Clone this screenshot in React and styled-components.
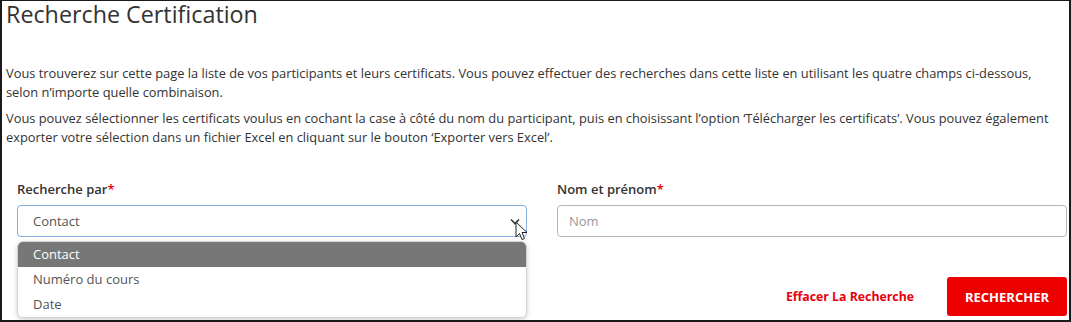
import React from "react";
import styled, { createGlobalStyle } from "styled-components";

const Global = createGlobalStyle`
  html, body { margin: 0; padding: 0; background: #fff; }
  body { font-family: "Open Sans", "Noto Sans", Arial, sans-serif; }
  * { box-sizing: border-box; }
`;

const Frame = styled.div`
  width: 1071px;
  height: 322px;
  border: 1px solid #1a1a1a;
  border-left-width: 2px;
  border-bottom-width: 2px;
  border-right-width: 2px;
  background: #fff;
  overflow: hidden;
  position: relative;
`;

const Title = styled.h1`
  margin: 0 0 0 4px;
  font-size: 23.3px;
  line-height: 26px;
  font-weight: 400;
  color: #333;
`;

const Text = styled.p`
  margin: ${(p) => p.$top}px 6px 0 4px;
  font-size: 12.85px;
  line-height: 19px;
  color: #333;
`;

const Form = styled.div`
  display: grid;
  grid-template-columns: 510px 510px;
  column-gap: 30px;
  margin: 33px 0 0 15px;
`;

const Field = styled.div`
  display: flex;
  flex-direction: column;
  gap: 6px;
  position: relative;
`;

const Label = styled.label`
  font-size: 13px;
  line-height: 19px;
  font-weight: 600;
  color: #333;
  span { color: #e00; }
`;

const SelectBox = styled.div`
  height: 32px;
  border: 1px solid #86aede;
  border-radius: 4px;
  display: flex;
  align-items: center;
  justify-content: space-between;
  padding: 0 6px 0 15px;
  font-size: 13px;
  color: #555;
  position: relative;
`;

const Input = styled.div`
  height: 32px;
  border: 1px solid #b5b5b5;
  border-radius: 4px;
  display: flex;
  align-items: center;
  padding: 0 11px;
  font-size: 13px;
  color: #999;
`;

const Menu = styled.ul`
  position: absolute;
  left: 0;
  right: 0;
  top: 61px;
  margin: 0;
  padding: 0;
  list-style: none;
  background: #fff;
  border: 1px solid #d4d4d4;
  border-radius: 6px;
  overflow: hidden;
  box-shadow: 0 2px 5px rgba(0, 0, 0, 0.18);
  z-index: 2;
`;

const Option = styled.li`
  height: 25px;
  line-height: 24px;
  padding-left: 15px;
  font-size: 13px;
  color: ${(p) => (p.$active ? "#fff" : "#555")};
  background: ${(p) => (p.$active ? "#777" : "#fff")};
`;

const Actions = styled.div`
  display: flex;
  justify-content: flex-end;
  align-items: center;
  gap: 33px;
  margin-top: 40px;
`;

const LinkButton = styled.button`
  background: none;
  border: none;
  padding: 0;
  font-family: inherit;
  font-size: 12.3px;
  font-weight: 700;
  color: #e8000b;
  cursor: pointer;
`;

const PrimaryButton = styled.button`
  width: 120px;
  height: 39px;
  border: none;
  border-radius: 3px;
  background: #ec0000;
  color: #fff;
  font-family: inherit;
  font-size: 13px;
  font-weight: 700;
  cursor: pointer;
`;

const Cursor = styled.svg`
  position: absolute;
  right: -2px;
  top: 15px;
  z-index: 3;
`;

export default function App() {
  return (
    <>
      <Global />
      <Frame>
        <Title>Recherche Certification</Title>
        <Text $top={37}>
          Vous trouverez sur cette page la liste de vos participants et leurs certificats. Vous pouvez effectuer des
          recherches dans cette liste en utilisant les quatre champs ci-dessous, selon n’importe quelle combinaison.
        </Text>
        <Text $top={7}>
          Vous pouvez sélectionner les certificats voulus en cochant la case à côté du nom du participant, puis en
          choisissant l’option ‘Télécharger les certificats’. Vous pouvez également exporter votre sélection dans un
          fichier Excel en cliquant sur le bouton ‘Exporter vers Excel’.
        </Text>
        <Form>
          <Field>
            <Label>
              Recherche par<span>*</span>
            </Label>
            <SelectBox>
              Contact
              <svg width="10" height="7" viewBox="0 0 10 7">
                <path d="M1 1.5 L5 5.5 L9 1.5" fill="none" stroke="#333" strokeWidth="1.6" />
              </svg>
              <Cursor width="13" height="20" viewBox="0 0 13 20">
                <path
                  d="M1 1 L1 16 L4.5 12.5 L7 18.5 L9.5 17.5 L7 11.5 L12 11.5 Z"
                  fill="#fff"
                  stroke="#222"
                  strokeWidth="1"
                  strokeLinejoin="round"
                />
              </Cursor>
            </SelectBox>
            <Menu>
              <Option $active>Contact</Option>
              <Option>Numéro du cours</Option>
              <Option>Date</Option>
            </Menu>
          </Field>
          <Field>
            <Label>
              Nom et prénom<span>*</span>
            </Label>
            <Input>Nom</Input>
          </Field>
          <div />
          <Actions>
            <LinkButton>Effacer La Recherche</LinkButton>
            <PrimaryButton>RECHERCHER</PrimaryButton>
          </Actions>
        </Form>
      </Frame>
    </>
  );
}
